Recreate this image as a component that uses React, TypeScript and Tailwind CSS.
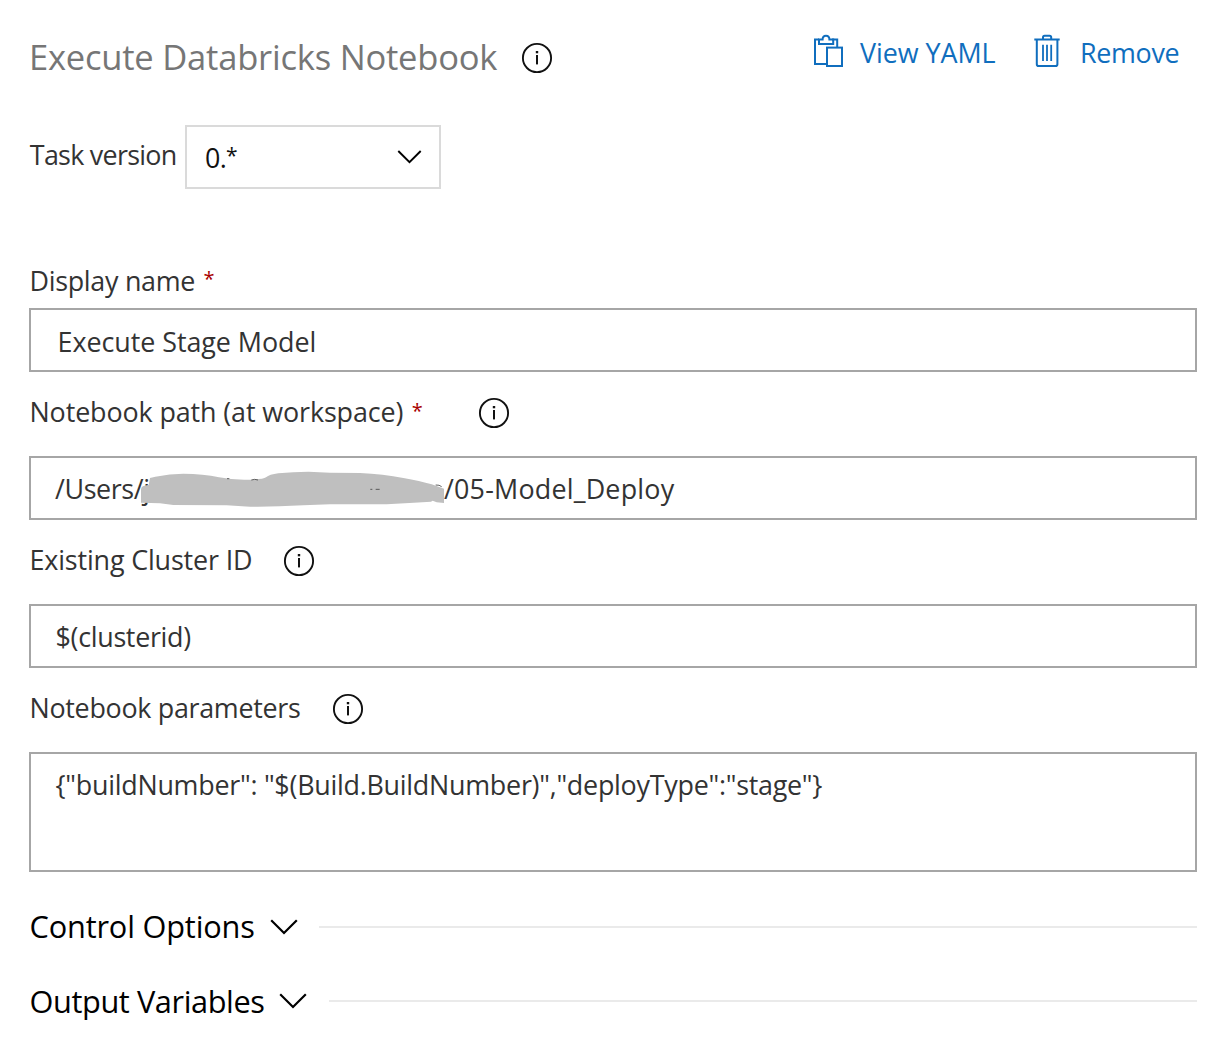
import React from "react";

function InfoIcon({ className = "" }: { className?: string }) {
  return (
    <svg viewBox="0 0 32 32" className={`size-8 shrink-0 ${className}`} fill="none">
      <circle cx="16" cy="16" r="14.1" stroke="#111" strokeWidth="1.9" />
      <rect x="14.8" y="9" width="2.4" height="2.3" fill="#111" />
      <rect x="15" y="13" width="2" height="9.4" fill="#111" />
    </svg>
  );
}

function Chevron({ className = "" }: { className?: string }) {
  return (
    <svg viewBox="0 0 28 16" className={`shrink-0 ${className}`} fill="none">
      <path d="M1.2 1.2 14 14 26.8 1.2" stroke="#000" strokeWidth="2.2" />
    </svg>
  );
}

function ClipboardIcon() {
  return (
    <svg viewBox="0 0 30 34" className="-mt-[4px] h-[34px] w-[30px] shrink-0" fill="none" stroke="#106ebe" strokeWidth="2">
      <path d="M13 30H2V5.6H6M19 5.6H24.2V13" />
      <path d="M6 5.6H9.6C9.6 0.6 16.4 0.6 16.4 5.6H20.2V10H6Z" />
      <rect x="14" y="13.6" width="15" height="18.4" />
    </svg>
  );
}

function TrashIcon({ className = "" }: { className?: string }) {
  return (
    <svg viewBox="0 0 26 34" className={`-mt-[4px] h-[34px] w-[26px] shrink-0 ${className}`} fill="none" stroke="#106ebe" strokeWidth="2">
      <path d="M0.3 5.6H25.7M9 5.6V3.4Q9 1.8 10.6 1.8H15.6Q17.2 1.8 17.2 3.4V5.6M2.8 5.6V30.2Q2.8 32 4.6 32H21.6Q23.4 32 23.4 30.2V5.6" />
      <path d="M9 10.7V27M13 10.7V27M17.2 10.7V27" strokeWidth="1.8" />
    </svg>
  );
}

function Required({ className = "" }: { className?: string }) {
  return <span className={`text-[20px] leading-none text-[#a80000] ${className}`}>*</span>;
}

const field = "flex h-16 items-center border-2 border-[#a6a6a6] bg-white whitespace-pre";

function Section({ title, spacing, chevron, rule }: { title: string; spacing: string; chevron: string; rule: string }) {
  return (
    <div className="flex h-[42px] items-center text-black">
      <span className={`text-[30.72px] leading-[42px] ${spacing}`}>{title}</span>
      <Chevron className={`h-4 w-7 ${chevron}`} />
      <span className={`h-0.5 bg-[#eaeaea] ${rule}`} />
    </div>
  );
}

export default function App() {
  return (
    <div className="h-[1046px] w-[1228px] overflow-hidden bg-white pr-[31px] pl-[29px] font-['Open_Sans',sans-serif] text-[26.88px] leading-[38px] whitespace-nowrap text-[#333]">
      <header className="flex h-[100px] items-start justify-between">
        <div className="flex items-center pt-[33px]">
          <h1 className="w-[470px] text-[34.56px] leading-[48px] font-normal tracking-[-0.227px] text-[#767676]">
            Execute Databricks Notebook
          </h1>
          <InfoIcon className="mt-[2px] ml-[21.5px]" />
        </div>
        <div className="flex items-center pt-[34px] text-[#106ebe]">
          <ClipboardIcon />
          <span className="ml-[17px] w-[137px] tracking-[-0.049px]">View YAML</span>
          <TrashIcon className="ml-[37px]" />
          <span className="mr-[18px] ml-[20px] w-[99px] tracking-[-0.33px]">Remove</span>
        </div>
      </header>

      <div className="mt-[25px] flex h-16 items-center">
        <span className="-mt-[4px] w-[156px] pl-[0.8px] tracking-[-0.718px]">Task version</span>
        <div className="flex h-16 w-64 items-center border-2 border-[#dadada] pr-[17px] pl-[18px] text-[#111]">
          <span className="mt-[2px] tracking-[-0.7px]">0.</span>
          <span className="-mt-[3px] text-[21px] leading-none">*</span>
          <Chevron className="ml-auto h-[14px] w-[25px]" />
        </div>
      </div>

      <div className="mt-[73px] flex h-[38px] items-center pl-[0.5px]">
        <span className="tracking-[-0.29px]">Display name</span>
        <Required className="-mt-[4px] ml-[8.5px]" />
      </div>
      <div className={`mt-2 pt-[3px] pl-[26.5px] tracking-[-0.049px] ${field}`}>Execute Stage Model</div>

      <div className="mt-5 flex h-[42px] items-center pl-[0.5px]">
        <span className="-mt-[2px] tracking-[-0.112px]">Notebook path (at workspace)</span>
        <Required className="-mt-[4px] ml-[8.5px]" />
        <InfoIcon className="ml-[55.5px]" />
      </div>
      <div className={`relative mt-[22px] pl-[24px] ${field}`}>
        <span className="mt-[2px] w-[389px] tracking-[-0.406px]">/Users/j</span>
        <span className="mt-[2px] tracking-[0.2px]">/05-Model_Deploy</span>
        <svg viewBox="360 60 915 114" className="absolute top-[12px] left-[109px] h-[38px] w-[305px]">
          <path
            d="M363 158V118Q363 106 386 105L390 84 406 80Q450 71 490 71 550 71 597 82 640 91 690 89 730 88 738 82 748 73 775 70 820 65 865 65L930 68 1020 69Q1090 72 1150 84 1200 93 1235 103L1272 116V159L1250 157 1238 152 1233 155Q1170 158 1100 163L930 163 850 166Q760 171 690 170L620 166 460 165 420 160Z"
            fill="#bfbfbf"
          />
          <path d="M1051 118H1057M1067 118H1079M1247 105Q1258 104 1265 110M621 86H628M694 90Q704 86 714 90" fill="none" stroke="#444" strokeWidth="2.5" />
        </svg>
      </div>

      <div className="mt-5 flex h-[42px] items-center pl-[0.5px]">
        <span className="-mt-[2px] tracking-[-0.148px]">Existing Cluster ID</span>
        <InfoIcon className="ml-[30.5px]" />
      </div>
      <div className={`mt-[22px] pt-[2px] pl-[24.5px] tracking-[-0.311px] ${field}`}>$(clusterid)</div>

      <div className="mt-5 flex h-[42px] items-center pl-[0.5px]">
        <span className="-mt-[2px] tracking-[-0.298px]">Notebook parameters</span>
        <InfoIcon className="ml-[31.5px]" />
      </div>
      <div className="mt-[22px] h-[120px] border-2 border-[#a6a6a6] bg-white pt-[12px] pl-[24.5px] tracking-[-0.26px]">
        {'{"buildNumber": "$(Build.BuildNumber)","deployType":"stage"}'}
      </div>

      <div className="mt-[34px] flex flex-col gap-[32px] pl-[0.5px]">
        <Section title="Control Options" spacing="-mt-[2px] w-[227px] tracking-[-0.17px]" chevron="ml-[13px]" rule="ml-[21.5px] flex-1" />
        <Section title="Output Variables" spacing="w-[237px] tracking-[-0.4px]" chevron="ml-[12.5px]" rule="ml-[22px] flex-1" />
      </div>
    </div>
  );
}
